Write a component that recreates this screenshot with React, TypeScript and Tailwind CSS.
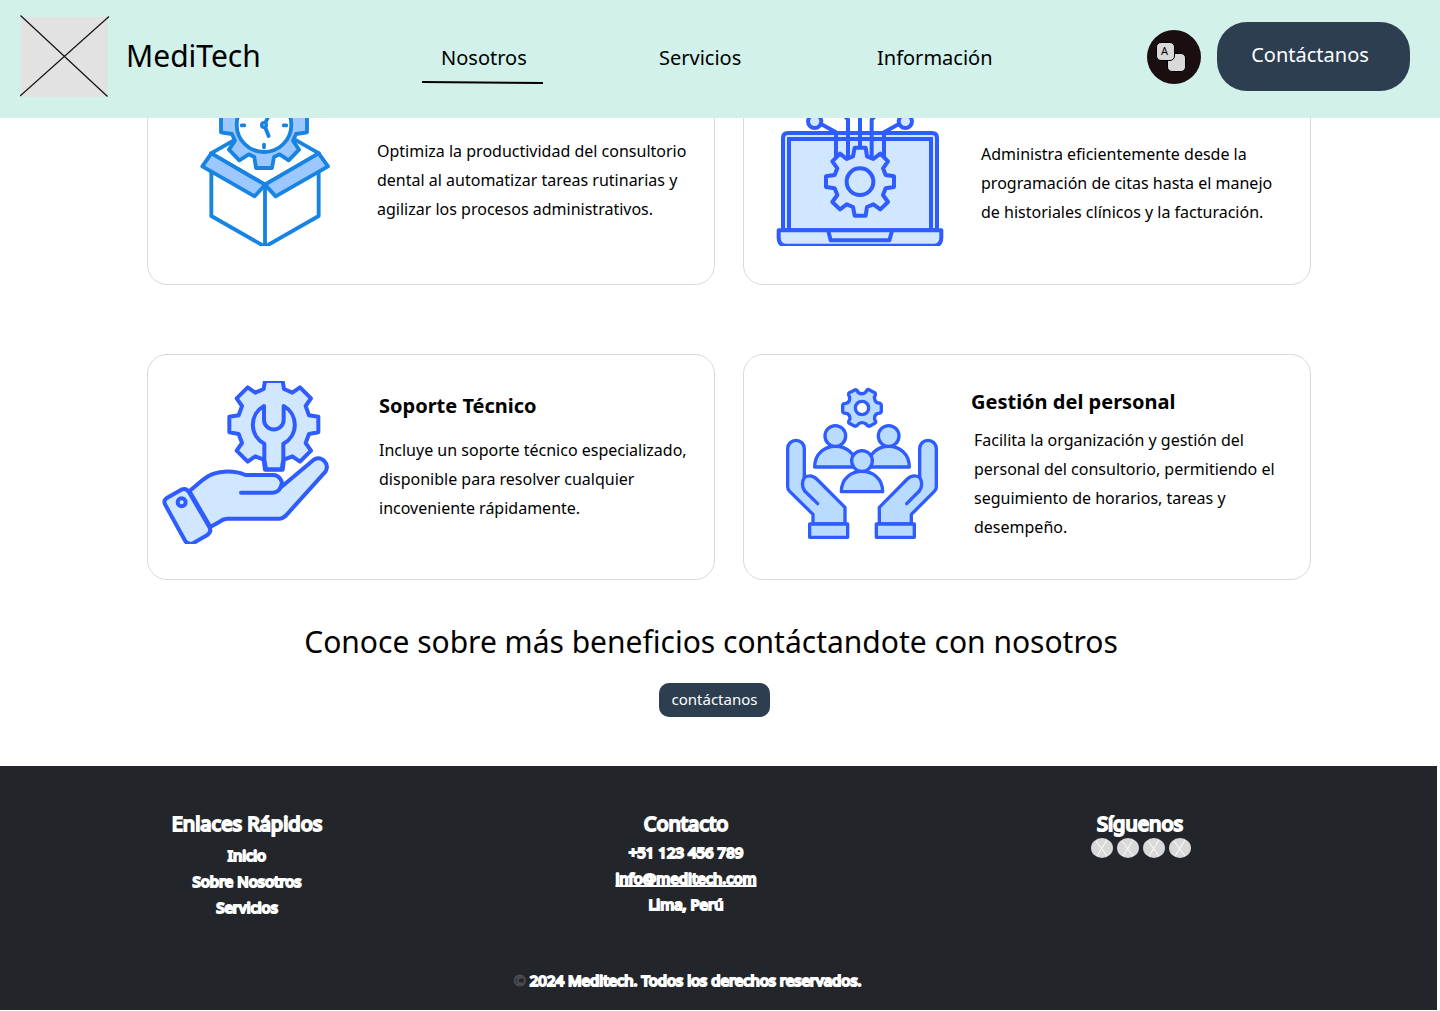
import type { ReactNode } from "react";

const BLUE = "#2f5cff";
const SKY = "#1784e4";

function LogoPlaceholder() {
  return (
    <svg width="90" height="84" viewBox="0 0 90 84" className="shrink-0" aria-hidden="true">
      <rect x="1" y="2" width="87" height="80" fill="#e2e2e2" />
      <path d="M0.5 0.500 L87.500 81.500 M0 81 L89 1.500" stroke="#111" strokeWidth="1.200" fill="none" />
    </svg>
  );
}

function BoxClockIcon() {
  return (
    <svg width="130" height="175" viewBox="180 -87 390 525" fill="none" stroke={SKY} strokeWidth="11.500" strokeLinejoin="round" strokeLinecap="round" aria-hidden="true">
      <path d="M213 160 L375 68 L537 160 L375 254 Z" fill="#fff" />
      <path d="M214 200 V348 L375 440 L536 348 V200 L375 254 Z" fill="#fff" />
      <path d="M375 254 V440" />
      <path d="M214 160 L375 254 L344 289 L187 199 Z" fill="#9cc8ff" />
      <path d="M536 160 L375 254 L407 289 L564 199 Z" fill="#9cc8ff" />
      <path d="M243 48 V97 L276 102 L285 122 L267 149 L298 181 L326 163 L343 171 L348 204 H396 L402 171 L419 163 L446 181 L477 149 L459 122 L468 102 L501 97 V48 L468 43 L459 22 L478 -5 L446 -37 L419 -19 L402 -27 L396 -60 H348 L343 -27 L326 -19 L298 -37 L266 -5 L285 22 L276 43 Z" fill="#9cc8ff" />
      <circle cx="372" cy="74" r="82" fill="#fff" />
      <path d="M305 76 H313 M431 76 H439 M372 134 V142 M372 6 V14" />
      <path d="M376 83 L386 108 M377 66 L386 48" />
      <circle cx="372" cy="75" r="7" strokeWidth="10" />
    </svg>
  );
}

function LaptopGearIcon() {
  return (
    <svg width="168" height="168" viewBox="108 -66 504 504" fill="none" stroke={BLUE} strokeWidth="12" strokeLinejoin="round" strokeLinecap="round" aria-hidden="true">
      <path d="M129 391 V114 Q129 99 144 99 H576 Q591 99 591 114 V391 Z" fill="#d1e6ff" />
      <path d="M147 391 V117 H573 V391" strokeLinejoin="miter" />
      <path d="M288 172 V97 L243 72 M324 175 V58 L304 38 M360 142 V-40 M395 175 V58 L416 38 M432 172 V97 L477 72" />
      <circle cx="224" cy="64" r="20" fill="#d1e6ff" />
      <circle cx="496" cy="64" r="20" fill="#d1e6ff" />
      <circle cx="290" cy="18" r="20" fill="#d1e6ff" />
      <circle cx="430" cy="18" r="20" fill="#d1e6ff" />
      <circle cx="360" cy="-40" r="20" fill="#d1e6ff" />
      <path d="M344 143 H377 L381 169 L400 177 L421 161 L444 184 L429 205 L437 225 L462 229 V261 L437 265 L429 285 L444 306 L421 328 L400 313 L381 321 L377 347 H344 L339 321 L320 313 L300 328 L277 306 L292 285 L284 265 L258 261 V229 L284 225 L292 205 L277 184 L300 161 L320 177 L339 169 Z" fill="#d1e6ff" />
      <circle cx="360" cy="245" r="40" />
      <path d="M116 391 H604 V411 Q604 437 583 437 H137 Q116 437 116 411 Z" fill="#d1e6ff" />
      <path d="M265 393 L272 421 H448 L456 393" />
    </svg>
  );
}

function HandWrenchIcon() {
  return (
    <svg width="168" height="163" viewBox="66 108 504 489" fill="none" stroke={BLUE} strokeWidth="12" strokeLinejoin="round" strokeLinecap="round" aria-hidden="true">
      <path d="M375 108 H428 L432 132 L457 143 L480 127 L513 160 L497 183 L507 211 L535 215 V262 L507 267 L497 294 L513 317 L480 350 L457 334 L432 344 L428 374 H375 L371 344 L346 334 L323 350 L290 317 L306 294 L296 267 L268 262 V215 L296 211 L306 183 L290 160 L323 127 L346 143 L371 132 Z" fill="#d1e6ff" />
      <path d="M372 183 A64 64 0 0 0 373 296 V344 L378 373 H425 L430 344 V296 A64 64 0 0 0 431 183 V224 A29 29 0 0 1 372 224 Z" fill="#d1e6ff" />
      <path d="M148 438 C180 415 198 383 253 380 Q289 378 316 390 H398 A26 26 0 0 1 423 427 L523 343 A26 26 0 0 1 557 379 L441 508 Q430 521 416 521 H262 Q250 521 239 530 L211 546 Z" fill="#d1e6ff" />
      <path d="M303 443 H398 Q418 443 424 420" />
      <path d="M79 460 L124 434 Q139 427 148 443 L208 546 Q216 560 202 570 L162 593 Q147 601 137 590 L75 478 Q70 466 79 460 Z" fill="#d1e6ff" />
      <circle cx="125" cy="472" r="12" />
    </svg>
  );
}

function TeamHandsIcon() {
  return (
    <svg width="152" height="152" viewBox="138 126 456 456" fill="none" stroke={BLUE} strokeWidth="10" strokeLinejoin="round" strokeLinecap="round" aria-hidden="true">
      <g fill="#b9dbff">
        <path d="M346 134 Q351 134 354 142 Q366 151 377 142 Q381 132 387 134 L404 143 Q409 147 403 156 Q405 174 416 174 Q425 175 424 182 V198 Q424 205 414 205 Q402 208 404 224 Q411 232 404 235 L390 243 Q384 246 378 237 Q366 229 355 237 Q350 246 343 243 L328 235 Q323 231 330 222 Q330 207 319 205 Q308 206 308 198 V182 Q308 175 317 175 Q330 173 329 157 Q323 147 328 143 Z" />
        <circle cx="366" cy="189" r="20" fill="#fff" />
        <path d="M224 366 C224 283 349 283 349 366 Z" />
        <path d="M384 366 C384 283 508 283 508 366 Z" />
        <circle cx="286" cy="273" r="31" />
        <circle cx="446" cy="273" r="31" />
        <path d="M304 440 C304 359 428 359 428 440 Z" />
        <circle cx="366" cy="348" r="31" />
        <path d="M143 311 A25 25 0 0 1 193 311 V397 Q214 386 230 402 L315 487 V537 H219 V508 L149 439 Q143 433 143 425 Z" />
        <path d="M589 311 A25 25 0 0 0 539 311 V397 Q518 386 502 402 L418 487 V537 H514 V508 L583 439 Q589 433 589 425 Z" />
        <path d="M209 537 H323 V577 H209 Z M409 537 H523 V577 H409 Z" />
      </g>
      <path d="M193 397 Q181 418 194 438 L233 476 M539 397 Q552 418 538 438 L500 476" />
    </svg>
  );
}

type CardProps = {
  icon: ReactNode;
  title: string;
  iconClass: string;
  bodyClass: string;
  textClass: string;
  children: ReactNode;
};

function Card({ icon, title, iconClass, bodyClass, textClass, children }: CardProps) {
  return (
    <article className="flex h-[226px] rounded-[20px] border border-[#d9d9d9] bg-white">
      <div className={`shrink-0 ${iconClass}`}>{icon}</div>
      <div className={`min-w-0 flex-1 ${bodyClass}`}>
        <h3 className="text-xl leading-7 font-bold">{title}</h3>
        <p className={`text-base leading-[29px] ${textClass}`}>{children}</p>
      </div>
    </article>
  );
}

function SocialLink({ label }: { label: string }) {
  return (
    <a href="#" aria-label={label} className="block">
      <svg width="22" height="20" viewBox="0 0 22 20" aria-hidden="true">
        <ellipse cx="11" cy="10" rx="11" ry="10" fill="#d9d9d9" />
        <path d="M5 3 L16 18 M16 2 L6 18" stroke="#fff" strokeWidth="1" />
      </svg>
    </a>
  );
}

export default function App() {
  return (
    <div className="bg-white font-['Noto_Sans',sans-serif] text-black">
      <header className="sticky top-0 z-10 flex h-[118px] items-center bg-[#d1f1ea] pr-[30px] pb-[5px] pl-5">
        <LogoPlaceholder />
        <span className="w-[312px] shrink-0 pb-[2px] pl-4 text-3xl leading-10">MediTech</span>
        <nav className="flex pt-[3px] text-xl leading-7">
          <a href="#nosotros" className="relative w-[218px] pl-[19px]">
            Nosotros
            <svg width="121" height="4" viewBox="0 0 121 4" className="absolute top-[37px] left-0" aria-hidden="true">
              <path d="M0 1 L121 2" stroke="#000" strokeWidth="2" />
            </svg>
          </a>
          <a href="#servicios" className="w-[218px] pl-[19px]">Servicios</a>
          <a href="#informacion" className="pl-[19px]">Información</a>
        </nav>
        <div className="ml-auto flex items-center gap-4">
          <button type="button" aria-label="Cambiar idioma" className="flex size-[54px] items-center justify-center rounded-full bg-[#1b0e11] pr-[6px]">
            <span className="relative block h-[30px] w-[30px] text-[11px] text-black">
              <span className="absolute right-0 bottom-0 size-[19px] rounded-[5px] border border-black bg-[#d9d9d9]" />
              <span className="absolute top-0 left-0 flex size-[19px] items-center justify-center rounded-[5px] border border-black bg-[#d9d9d9] pr-[2px]">A</span>
            </span>
          </button>
          <button type="button" className="h-[69px] w-[193px] rounded-[30px] bg-[#2d3e50] pr-[7px] pb-1 text-xl leading-7 text-white">Contáctanos</button>
        </div>
      </header>

      <main className="-mt-[59px]">
        <section className="grid grid-cols-2 gap-x-7 gap-y-[69px] pr-[129px] pl-[147px]">
          <Card icon={<BoxClockIcon />} title="Productividad" iconClass="pl-[52px] pt-[11px]" bodyClass="pl-[47px] pt-[37px]" textClass="pt-3">
            Optimiza la productividad del consultorio dental al automatizar tareas rutinarias y agilizar los procesos administrativos.
          </Card>
          <Card icon={<LaptopGearIcon />} title="Gestión y control" iconClass="pl-8 pt-[18px]" bodyClass="pl-6 pt-8 pr-6" textClass="pl-[13px] pt-5">
            Administra eficientemente desde la programación de citas hasta el manejo de historiales clínicos y la facturación.
          </Card>
          <Card icon={<HandWrenchIcon />} title="Soporte Técnico" iconClass="pl-[14px] pt-[26px]" bodyClass="pl-[49px] pt-[37px]" textClass="pt-4">
            Incluye un soporte técnico especializado, disponible para resolver cualquier incoveniente rápidamente.
          </Card>
          <Card icon={<TeamHandsIcon />} title="Gestión del personal" iconClass="pl-[42px] pt-8" bodyClass="pl-[33px] pt-[33px] pr-6" textClass="pl-[3px] pt-[10px]">
            Facilita la organización y gestión del personal del consultorio, permitiendo el seguimiento de horarios, tareas y desempeño.
          </Card>
        </section>

        <section className="flex flex-col items-center pt-[42px] pr-[11px] pb-[49px]">
          <h2 className="pr-[7px] text-3xl leading-10">Conoce sobre más beneficios contáctandote con nosotros</h2>
          <button type="button" className="mt-[21px] h-[34px] w-[111px] rounded-[10px] bg-[#2d3e50] pb-[2px] text-[15px] leading-5 text-white">contáctanos</button>
        </section>
      </main>

      <footer className="mr-[3px] mb-px bg-[#22252a] pt-[45px] pb-[17px] text-[15px] leading-[26px] text-white [-webkit-text-stroke:2px_white]">
        <div className="grid grid-cols-[494fr_384fr_524fr] pr-[35px] text-center">
          <div className="flex flex-col items-center">
            <h4 className="mb-[5px] text-xl leading-[26px]">Enlaces Rápidos</h4>
            <a href="#inicio" className="block">Inicio</a>
            <a href="#sobre" className="block">Sobre Nosotros</a>
            <a href="#servicios">Servicios</a>
          </div>
          <div className="flex flex-col items-center">
            <h4 className="mb-[2px] text-xl leading-[26px]">Contacto</h4>
            <span>+51 123 456 789</span>
            <a href="mailto:info@meditech.com" className="underline decoration-2">info@meditech.com</a>
            <span>Lima, Perú</span>
          </div>
          <div className="flex flex-col items-center">
            <h4 className="mb-px text-xl leading-[26px]">Síguenos</h4>
            <div className="flex gap-1 pl-[2px]">
              <SocialLink label="Facebook" />
              <SocialLink label="Instagram" />
              <SocialLink label="Twitter" />
              <SocialLink label="LinkedIn" />
            </div>
          </div>
        </div>
        <p className="mt-[47px] pr-[62px] text-center">
          <span className="text-[#4b4c4f] [-webkit-text-stroke:1px_#4b4c4f]">©</span> 2024 Meditech. Todos los derechos reservados.
        </p>
      </footer>
    </div>
  );
}
